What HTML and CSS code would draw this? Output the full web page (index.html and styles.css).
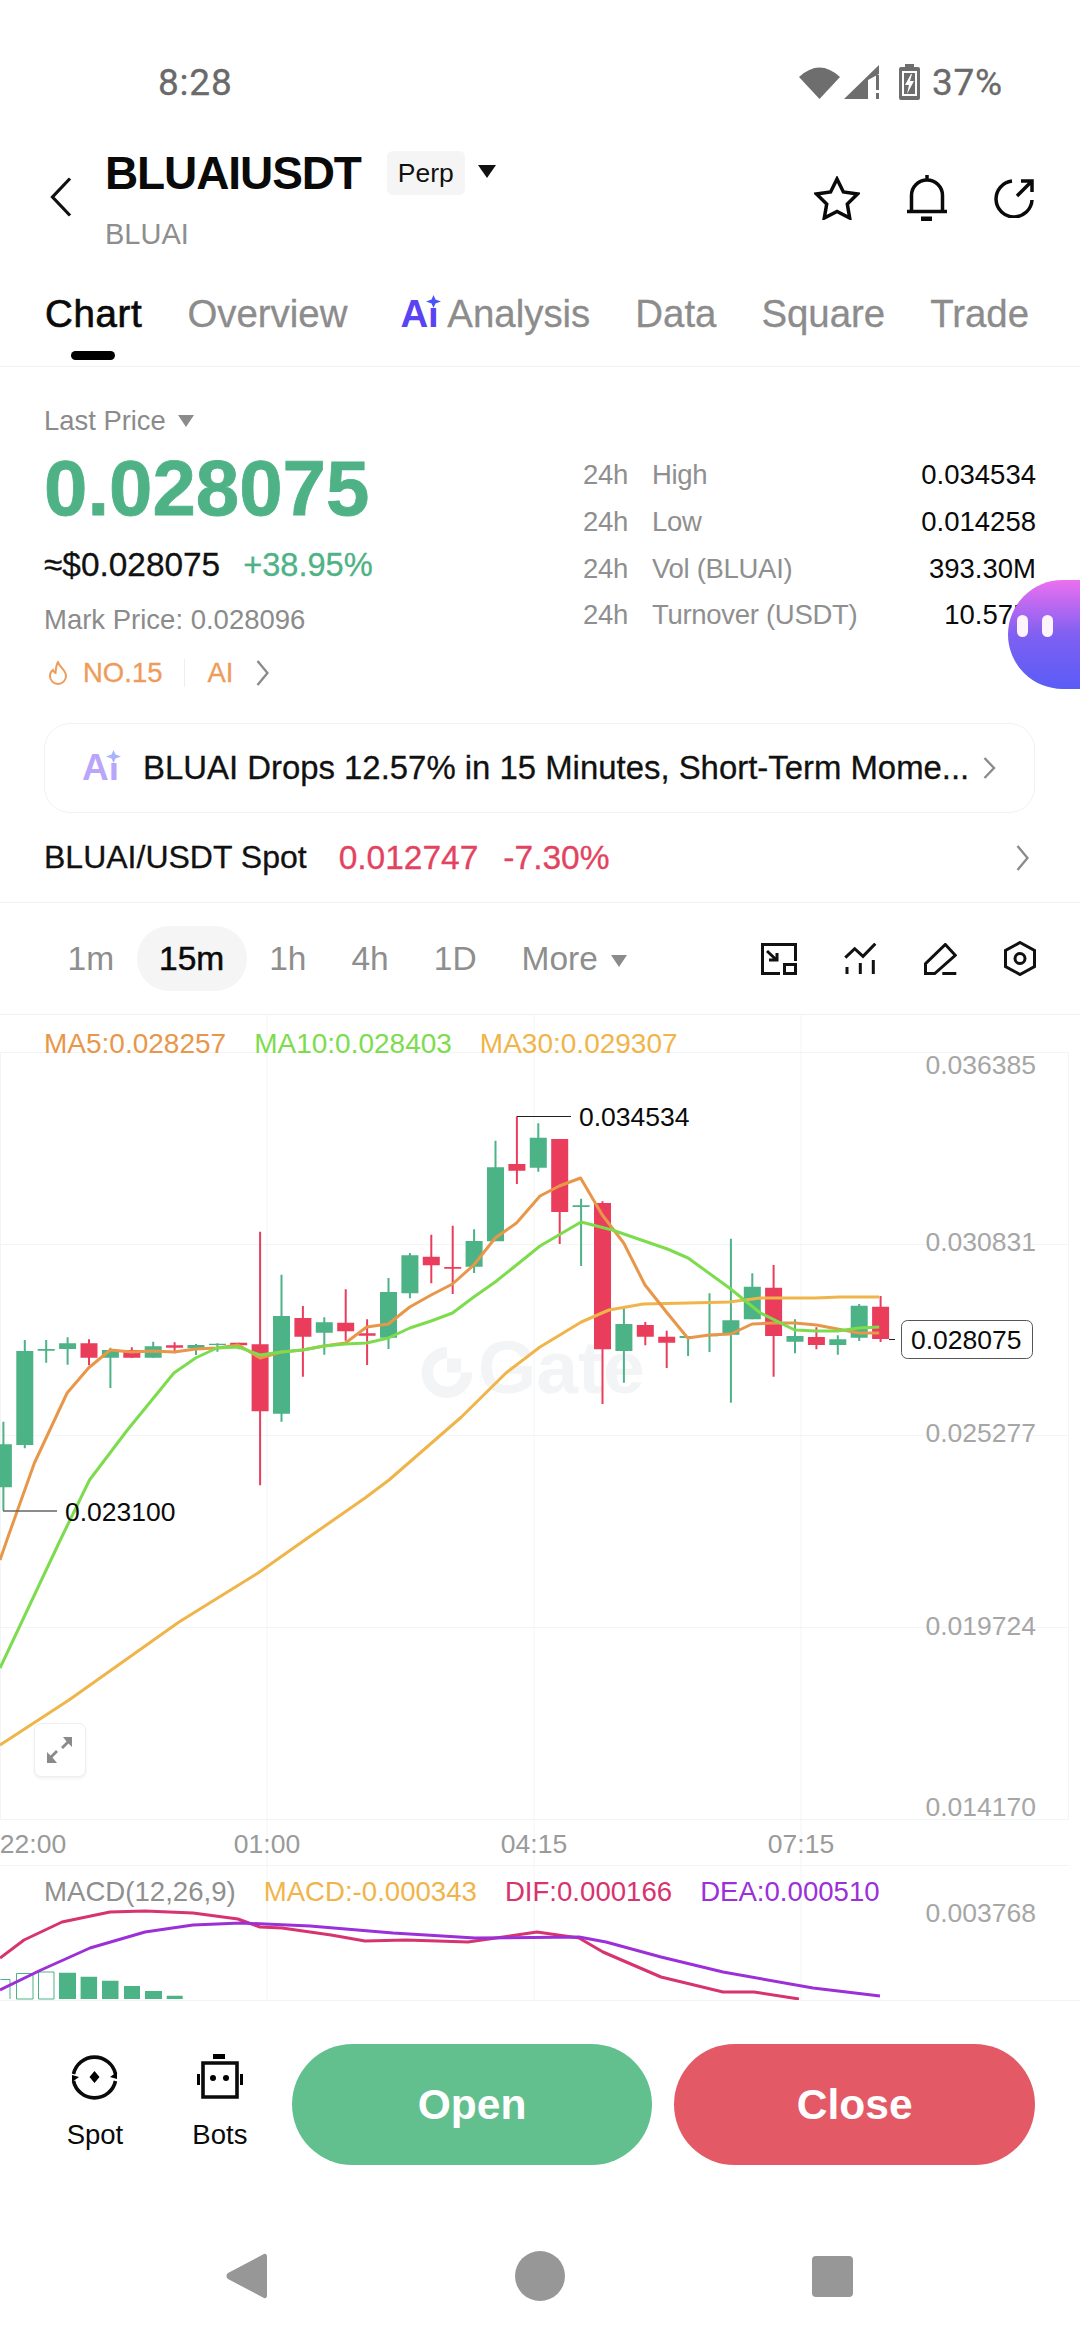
FILE: index.html
```html
<!DOCTYPE html>
<html lang="en">
<head>
  <meta charset="UTF-8" />
  <meta name="viewport" content="width=device-width, initial-scale=1.0" />
  <title>BLUAIUSDT Perp</title>
  <link rel="stylesheet" href="styles.css">
</head>
<body>
  <div class="page">

    <!-- Status bar -->
    <div class="status">
      <span>8:28</span>
      <div class="status-right">
        <svg class="icon-wifi" width="42" height="34" viewBox="0 0 42 34"><path d="M20.5 34L0 12Q20.5-7 41 12Z"/></svg>
        <svg class="icon-signal" width="36" height="34" viewBox="0 0 36 34"><path d="M0 34L35 0V9L24 15V34Z"/><path d="M32 10h3v15h-3zM32 28h3v6h-3z"/></svg>
        <svg class="icon-battery" width="21" height="36" viewBox="0 0 21 36"><path d="M6 0h9v3h4a2 2 0 0 1 2 2v29a2 2 0 0 1-2 2H2a2 2 0 0 1-2-2V5a2 2 0 0 1 2-2h4z"/><path class="cut" d="M3 7h15v25H3z"/><path d="M5 9h11v21H5z"/><path class="cut" d="M12 10L6 21h4l-2 9 7-13h-4l2-7z"/></svg>
        <span>37%</span>
      </div>
    </div>

    <!-- Title -->
    <div class="header">
      <svg class="back" width="22" height="40" viewBox="0 0 22 40"><path d="M20 1.5L2.5 20 20 38.5"/></svg>
      <div class="title-block">
        <div class="title-row">
          <span class="title">BLUAIUSDT</span>
          <span class="perp">Perp</span>
          <span class="caret caret-black"></span>
        </div>
        <div class="subtitle">BLUAI</div>
      </div>
      <div class="header-icons">
        <svg width="46" height="44" viewBox="0 0 46 44"><path d="M23 3l6.4 13 14.1 2-10.2 10 2.4 14L23 35.4 10.3 42l2.4-14L2.5 18l14.1-2z"/></svg>
        <svg width="40" height="46" viewBox="0 0 40 46"><path d="M4.5 36V20.5a15.5 15.5 0 0 1 31 0V36M0 36.5h40M20 0v5"/><path class="thick" d="M14 44h11"/></svg>
        <svg width="40" height="40" viewBox="0 0 40 40"><path d="M18 3A18 18 0 1 0 38 22M23 18L38 3M27 3h11v11"/></svg>
      </div>
    </div>

    <!-- Tabs -->
    <div class="tabs">
      <span class="tab active">Chart</span>
      <span class="tab">Overview</span>
      <span class="tab tab-ai">
        <span class="ai">Ai<svg class="spark" width="15" height="13" viewBox="0 0 15 13"><path d="M7.5 0L9.5 4.5 15 6.5 9.5 8.5 7.5 13 5.5 8.5 0 6.5 5.5 4.5z"/></svg></span>
        Analysis
      </span>
      <span class="tab">Data</span>
      <span class="tab">Square</span>
      <span class="tab">Trade</span>
    </div>

    <!-- Ticker -->
    <div class="ticker">
      <div class="ticker-left">
        <div class="last-label">Last Price <span class="caret caret-gray"></span></div>
        <div class="last-price">0.028075</div>
        <div class="sub-row">
          <span class="usd">≈$0.028075</span>
          <span class="pct">+38.95%</span>
        </div>
        <div class="mark">Mark Price: 0.028096</div>
        <div class="tags">
          <svg class="flame" width="20" height="24" viewBox="0 0 20 24"><path d="M10 1c1 5 8 8 8 14a8 8 0 0 1-16 0c0-3 1.5-5 3-6 .5 1.5 1.5 2.5 2.5 3C8 8 8 4 10 1z"/></svg>
          <span>NO.15</span>
          <span class="tag-sep"></span>
          <span>AI</span>
          <svg class="chev" width="13" height="26" viewBox="0 0 13 26"><path d="M1.5 1L11.5 13 1.5 25"/></svg>
        </div>
      </div>
      <div class="stats">
        <span>24h</span><span>High</span><b>0.034534</b>
        <span>24h</span><span>Low</span><b>0.014258</b>
        <span>24h</span><span>Vol (BLUAI)</span><b>393.30M</b>
        <span>24h</span><span>Turnover (USDT)</span><b>10.57M</b>
      </div>
      <div class="float-btn"><i></i><i></i></div>
    </div>

    <!-- AI news -->
    <div class="banner">
      <span class="ai ai-light">Ai<svg class="spark" width="15" height="13" viewBox="0 0 15 13"><path d="M7.5 0L9.5 4.5 15 6.5 9.5 8.5 7.5 13 5.5 8.5 0 6.5 5.5 4.5z"/></svg></span>
      <span class="banner-text">BLUAI Drops 12.57% in 15 Minutes, Short-Term Mome...</span>
      <svg class="chev" width="13" height="22" viewBox="0 0 13 22"><path d="M1.5 1L11 11 1.5 21"/></svg>
    </div>

    <!-- Spot link -->
    <div class="spot-row">
      <span class="spot-name">BLUAI/USDT Spot</span>
      <span class="spot-price">0.012747</span>
      <span class="spot-pct">-7.30%</span>
      <svg class="chev" width="13" height="26" viewBox="0 0 13 26"><path d="M1.5 1L11.5 13 1.5 25"/></svg>
    </div>

    <!-- Intervals -->
    <div class="intervals">
      <span class="iv">1m</span>
      <span class="iv iv-active">15m</span>
      <span class="iv">1h</span>
      <span class="iv">4h</span>
      <span class="iv">1D</span>
      <span class="iv iv-more">More <span class="caret caret-gray"></span></span>
      <div class="tools">
        <svg width="36" height="32" viewBox="0 0 36 32"><path d="M19 30.5H1.5v-29h33V18M23.5 21.5h11v9h-11zM6 8l9 8.5M8 17h8V10"/></svg>
        <svg width="33" height="32" viewBox="0 0 33 32"><path d="M1.3 14.7L10.7 5.7 19 13.3 31.3.7M3 24v7M16.3 20v11M29.3 17v14"/></svg>
        <svg width="33" height="32" viewBox="0 0 33 32"><path d="M21.3 1.5L31.3 12.3 10.7 30.5H1.5V20.7zM18.3 30.5h14"/></svg>
        <svg width="32" height="35" viewBox="0 0 32 35"><path d="M16 1.5l14.5 8v16L16 33.5l-14.5-8v-16z"/><circle cx="16" cy="17.5" r="5"/></svg>
      </div>
    </div>

    <!-- Chart canvas, drawn in page coordinates -->
    <div class="chart">
      <svg class="plot" width="1080" height="985" viewBox="0 1015 1080 985">
        <path class="grid" d="M0 1052.5H1069M0 1244.5H1069M0 1435.5H1069M0 1627.5H1069M0 1819.5H1069M0 1865.5H1069M267 1015V2000M534 1015V2000M801 1015V2000M1068.5 1052V1820M.5 1052V1820"/>

        <!-- watermark -->
        <path class="mark-logo" d="M447 1347a25.5 25.5 0 1 0 25.5 25.5H461a14 14 0 1 1-14-14zM447 1358.5h14v14h-14z"/>
        <text class="mark-text" x="478" y="1393">Gate</text>

        <!-- candles: wicks and bodies, one path per colour -->
        <path class="wick-up" d="M3.4 1421.7V1510.7M24.8 1340V1448.3M46.2 1340V1362.7M67.6 1337.3V1364.7M110.4 1347.7V1388M153.2 1341.7V1357.7M196 1344V1355M217.4 1343.3V1351.7M281.5 1274.7V1421.7M324.3 1317.3V1354.7M388.5 1278V1349M409.9 1253V1298.3M474.1 1229.3V1273M495.5 1140.7V1241.3M538.3 1123.3V1171.7M581.1 1198.7V1266M623.9 1308.3V1382.7M688.1 1336V1356M709.5 1293.3V1352M730.9 1238.7V1402.7M752.3 1273.3V1319.3M795 1319.3V1353.3M837.8 1335.3V1354.7M859.2 1304V1341"/>
        <path class="body-up" d="M3.4 1444.3V1487.3M24.8 1351V1445M46.2 1349V1350.7M67.6 1343.3V1349M110.4 1350V1357.7M153.2 1346.3V1357.7M196 1345V1348.3M217.4 1343.7V1345M281.5 1316V1413.7M324.3 1322.3V1332.7M388.5 1292V1337.7M409.9 1255.3V1293.3M474.1 1241V1266.7M495.5 1167.3V1241.3M538.3 1137.7V1167.7M581.1 1205.3V1207M623.9 1324V1351M688.1 1336V1338M709.5 1335.3V1336.3M730.9 1320.3V1334.7M752.3 1286.7V1319.3M795 1336V1341.7M837.8 1339.3V1345M859.2 1305.7V1337.7"/>
        <path class="wick-down" d="M89 1339.3V1365.3M131.8 1347.3V1357.7M174.6 1342.3V1353.3M238.7 1342.7V1349.3M260.1 1231.7V1485.3M302.9 1306V1376.7M345.7 1289.3V1340.7M367.1 1319.3V1365M431.3 1234.7V1283.3M452.7 1225.7V1294M516.9 1116.3V1184M559.7 1139V1244M602.5 1201.3V1404M645.3 1322V1345.3M666.7 1330.7V1368M773.6 1265V1376.7M816.4 1327.3V1349.3M880.6 1296V1342"/>
        <path class="body-down" d="M89 1343.3V1357.7M131.8 1350V1357.7M174.6 1345.3V1347.7M238.7 1342.7V1345.3M260.1 1344.3V1411.3M302.9 1318V1336.7M345.7 1322.7V1331.3M367.1 1333.3V1335.7M431.3 1256.7V1265.3M452.7 1267V1268.7M516.9 1164V1170.7M559.7 1139V1212M602.5 1203V1349.3M645.3 1325V1336.7M666.7 1336.7V1342.7M773.6 1287.7V1336M816.4 1337V1345M880.6 1306.7V1339"/>

        <!-- moving averages -->
        <polyline class="ma30" points="0,1745 69,1700 179,1622 258,1573 304.8,1540 365,1498 389,1480 461.4,1417 506,1373 540,1347 581.3,1322 608.9,1310 643.3,1304 688,1303 729.4,1302 760.4,1298 815.5,1298 839.6,1297 879.2,1297"/>
        <polyline class="ma5" points="0,1560 6.9,1540 34.4,1463 67.1,1393 88.5,1368 110.2,1350 131.5,1352 152.9,1351 174.2,1352 195.6,1349 216.9,1348 238.3,1345 260,1358 281.3,1352 302.7,1350 324,1346 345.4,1343 366.7,1327 388.4,1324 409.8,1307 431.1,1295 452.5,1284 473.8,1265 495.2,1238 516.5,1223 540,1196 559.3,1186 580.6,1178 602.3,1215 623.7,1243 645,1285 666.4,1312 687.7,1338 709.1,1335 730.8,1334 752.1,1324 773.5,1323 794.8,1323 816.5,1325 837.5,1329 859.2,1333 879.2,1333"/>
        <polyline class="ma10" points="0,1668 60.3,1540 89.5,1480 127.4,1430 173.9,1373 195.6,1358 216.9,1348 238.3,1347 260,1355 281.3,1352 302.7,1350 324,1346 345.4,1344 366.7,1343 388.4,1338 409.8,1328 431.1,1321 452.5,1313 473.8,1297 495.2,1282 516.5,1265 540,1246 581,1222 612.3,1230 667.4,1249 688.1,1258 729.4,1288 760.4,1313 794.8,1330 816.5,1331 837.5,1331 859.2,1328 879.2,1327"/>

        <!-- high / low / last markers -->
        <path class="leader" d="M517 1116.5H571"/>
        <text class="price-tag" x="579" y="1125.5">0.034534</text>
        <path class="leader leader-gray" d="M3 1511H57"/>
        <text class="price-tag" x="65" y="1520.5">0.023100</text>
        <path class="leader" d="M889 1339.5H895"/>
        <rect class="last-box" x="901.5" y="1320.5" width="131" height="38" rx="6"/>
        <text class="price-tag" x="911" y="1349">0.028075</text>

        <!-- price axis -->
        <text class="axis" x="925.5" y="1074">0.036385</text>
        <text class="axis" x="925.5" y="1251">0.030831</text>
        <text class="axis" x="925.5" y="1442">0.025277</text>
        <text class="axis" x="925.5" y="1635">0.019724</text>
        <text class="axis" x="925.5" y="1816">0.014170</text>
        <text class="axis" x="925.5" y="1922">0.003768</text>

        <!-- time axis -->
        <text class="axis time" x="33" y="1853">22:00</text>
        <text class="axis time" x="267" y="1853">01:00</text>
        <text class="axis time" x="534" y="1853">04:15</text>
        <text class="axis time" x="801" y="1853">07:15</text>

        <!-- MACD -->
        <path class="hist-open" d="M.5 1979.5H10V1999M16.5 1973.5H33V1999H16.5ZM38.5 1972H54V1999H38.5Z"/>
        <path class="hist" d="M59 1972.7h17V1999H59zM80.6 1976.7h16.5V1999H80.6zM102 1980.7h16.5V1999H102zM124 1986h16V1999H124zM145 1991h17V1999H145zM166.7 1995.7h16V1999H166.7z"/>
        <polyline class="dif" points="0,1958 24,1940 62,1922 110,1912 145,1911 193,1913 238,1919 260,1927 282,1928 331,1935 365,1941 406,1940 468,1942 496,1938 537,1932 579,1938 603,1952 661,1977 723,1992 754,1992 799,1999"/>
        <polyline class="dea" points="0,1990 41,1970 90,1948 145,1932 193,1925 241,1923 310,1926 393,1933 475,1938 579,1937 606,1942 661,1957 723,1972 813,1988 880,1996"/>
      </svg>

      <div class="legend legend-ma">
        <span class="c-ma5">MA5:0.028257</span>
        <span class="c-ma10">MA10:0.028403</span>
        <span class="c-ma30">MA30:0.029307</span>
      </div>
      <div class="legend legend-macd">
        <span class="c-gray">MACD(12,26,9)</span>
        <span class="c-ma30">MACD:-0.000343</span>
        <span class="c-dif">DIF:0.000166</span>
        <span class="c-dea">DEA:0.000510</span>
      </div>
      <div class="expand">
        <svg width="26" height="26" viewBox="0 0 26 26"><path d="M25 0v10l-3.5-3.5L16 12l-2-2 5.5-5.5L16 0zM0 26V15l3.5 3.5L9 13l2 2-5.5 5.5L10 26z"/></svg>
      </div>
    </div>

    <!-- Actions -->
    <div class="actions">
      <div class="action">
        <svg width="47" height="46" viewBox="0 0 47 46"><path class="line" d="M2.5 20A21.5 21.5 0 0 1 44.5 20M44.5 27A21.5 21.5 0 0 1 2.5 27"/><path d="M23.5 17l5 6-5 6-5-6zM39 23l7-5v7zM8 23l-7 5v-7z"/></svg>
        <span>Spot</span>
      </div>
      <div class="action">
        <svg width="46" height="46" viewBox="0 0 46 46"><path d="M16 0h12v5H16z"/><path class="line" d="M6 9h34v34H6z"/><path d="M0 20h3v11H0zM43 20h3v11h-3z"/><circle cx="16" cy="24" r="3"/><circle cx="29" cy="24" r="3"/></svg>
        <span>Bots</span>
      </div>
      <div class="btn btn-open">Open</div>
      <div class="btn btn-close">Close</div>
    </div>

    <!-- Android nav -->
    <div class="navbar">
      <svg width="42" height="46" viewBox="0 0 42 46"><path d="M37 1.5c2-1.5 4-.5 4 2v39c0 2.5-2 3.5-4 2L2 26c-2-1.5-2-4.5 0-6z"/></svg>
      <span class="nav-circle"></span>
      <span class="nav-square"></span>
    </div>
  </div>
</body>
</html>
```

FILE: styles.css
```css
* {
  box-sizing: border-box;
}
body {
  margin: 0;
  background: #fff;
  font-family: "Liberation Sans", Arial, sans-serif;
  color: #111;
}
.page {
  width: 1080px;
  height: 2340px;
  overflow: hidden;
  background: #fff;
}
svg {
  display: block;
  flex: none;
}

/* Status bar */
.status {
  height: 124px;
  padding: 40px 77px 0 158px;
  display: flex;
  justify-content: space-between;
  align-items: center;
  font-family: Roboto, sans-serif;
  font-size: 37px;
  letter-spacing: .8px;
  color: #6a6a6a;
  -webkit-text-stroke: .3px #6a6a6a;
}
.status-right {
  display: flex;
  align-items: center;
}
.status svg path {
  fill: #6e6e6e;
}
.status svg path.cut {
  fill: #fff;
}
.icon-wifi {
  margin-right: 3px;
}
.icon-battery {
  margin: 0 12px 0 19px;
}

/* Title */
.header {
  height: 143px;
  padding: 0 46px 0 50px;
  display: flex;
  position: relative;
}
.back {
  margin-top: 53px;
  margin-right: 33px;
}
.back path,
.chev path {
  fill: none;
  stroke: #111;
  stroke-width: 3.2;
}
.title-row {
  display: flex;
  align-items: center;
  height: 72px;
  margin-top: 13px;
}
.title {
  font-size: 46px;
  font-weight: bold;
  letter-spacing: -1.1px;
  color: #0a0a0a;
}
.perp {
  margin-left: 26px;
  width: 78px;
  height: 44px;
  background: #f5f5f5;
  border-radius: 6px;
  font-size: 26.5px;
  line-height: 44px;
  text-align: center;
}
.caret {
  display: inline-block;
  border-left: 9px solid transparent;
  border-right: 9px solid transparent;
  border-top: 13px solid #111;
}
.caret-black {
  margin-left: 13px;
  margin-top: -3px;
}
.caret-gray {
  border-left-width: 8.5px;
  border-right-width: 8.5px;
  border-top: 12px solid #8b8b8b;
  vertical-align: 3px;
  margin-left: 5px;
}
.subtitle {
  font-size: 29px;
  color: #8e8e8e;
  line-height: 34px;
  margin-top: 8px;
}
.header-icons {
  margin-left: auto;
  display: flex;
  gap: 47px;
  align-items: center;
  height: 100px;
  margin-top: 24px;
}
.header-icons path {
  fill: none;
  stroke: #0a0a0a;
  stroke-width: 3.5;
}
.header-icons path.thick {
  stroke-width: 5;
}

/* Tabs */
.tabs {
  height: 100px;
  padding: 14px 0 0 45px;
  display: flex;
  gap: 45px;
  align-items: center;
  border-bottom: 1px solid #f0f0f0;
  font-size: 38.4px;
  color: #8c8c8c;
  position: relative;
}
.tab {
  position: relative;
  -webkit-text-stroke: .3px #8c8c8c;
  white-space: nowrap;
  margin-top: -20px;
}
.tab.active {
  color: #0a0a0a;
  letter-spacing: .7px;
  -webkit-text-stroke: .7px #0a0a0a;
}
.tab.active::after {
  content: "";
  position: absolute;
  left: 26px;
  top: 59px;
  width: 44px;
  height: 9px;
  background: #000;
  border-radius: 5px;
}
.tab-ai {
  margin-left: 8px;
}
.ai {
  position: relative;
  display: inline-block;
  font-weight: bold;
  color: #5a43f2;
  -webkit-text-stroke: 0;
}
.spark {
  position: absolute;
  right: -2px;
  top: 3px;
  background: #fff;
}
.spark path {
  fill: #4a55f5;
}

/* Ticker */
.ticker {
  height: 356px;
  padding: 34px 44px 0 44px;
  display: flex;
  justify-content: space-between;
  position: relative;
}
.last-label {
  font-size: 27.4px;
  line-height: 40px;
  color: #8b8b8b;
}
.last-price {
  font-size: 78px;
  font-weight: bold;
  line-height: 80px;
  margin-top: 7px;
  color: #4fb286;
  -webkit-text-stroke: .8px #4fb286;
}
.sub-row {
  display: flex;
  gap: 23px;
  margin-top: 17px;
  line-height: 40px;
  font-size: 33.4px;
}
.usd {
  -webkit-text-stroke: .3px #111;
}
.pct {
  color: #4fb286;
  font-size: 32.6px;
  -webkit-text-stroke: .3px #4fb286;
}
.mark {
  margin-top: 17px;
  font-size: 27.5px;
  line-height: 36px;
  color: #8b8b8b;
}
.tags {
  margin-top: 17px;
  height: 36px;
  padding-left: 4px;
  display: flex;
  align-items: center;
  font-size: 27.5px;
  color: #ee9b5b;
  -webkit-text-stroke: .3px #ee9b5b;
}
.flame {
  margin-right: 15px;
}
.flame path {
  fill: none;
  stroke: #ee9b5b;
  stroke-width: 2;
}
.tag-sep {
  width: 1px;
  height: 28px;
  background: #eee;
  margin: 0 22px;
}
.tags .chev {
  margin-left: 23px;
}
.tags .chev path,
.banner .chev path,
.spot-row .chev path {
  stroke: #8b8b8b;
  stroke-width: 2.4;
}
.stats {
  width: 453px;
  margin-top: 51px;
  align-self: flex-start;
  display: grid;
  grid-template-columns: 69px 1fr auto;
  grid-auto-rows: 46.7px;
  align-items: center;
  font-size: 27.5px;
  color: #8f8f8f;
}
.stats span {
  letter-spacing: -.3px;
}
.stats b {
  font-weight: normal;
  color: #0a0a0a;
  text-align: right;
}
.float-btn {
  position: absolute;
  right: 0;
  top: 213px;
  width: 72px;
  height: 109px;
  border-radius: 55px 0 0 55px;
  background: linear-gradient(#ec70ef, #7f60f2 50%, #5a5cf6);
  display: flex;
  gap: 14px;
  padding: 35px 0 0 9px;
}
.float-btn i {
  width: 11px;
  height: 22px;
  background: #fdf3fd;
  border-radius: 6px;
}

/* AI news */
.banner {
  height: 90px;
  margin: 0 45px 0 44px;
  padding: 0 38px 0 37px;
  border: 1.5px solid #f2f2f4;
  border-radius: 26px;
  display: flex;
  align-items: center;
}
.ai-light {
  font-size: 37px;
  color: #b9a6fa;
}
.ai-light .spark path {
  fill: #a9b4fb;
}
.banner-text {
  margin-left: 24px;
  font-size: 32.9px;
  white-space: nowrap;
  -webkit-text-stroke: .3px #111;
}
.banner .chev {
  margin-left: auto;
}

/* Spot link */
.spot-row {
  height: 90px;
  padding: 0 51px 0 44px;
  display: flex;
  align-items: center;
  border-bottom: 1px solid #f0f0f0;
  font-size: 32px;
  -webkit-text-stroke: .3px currentColor;
}
.spot-price,
.spot-pct {
  color: #e2445f;
  font-size: 33.5px;
}
.spot-price {
  margin-left: 32px;
}
.spot-pct {
  margin-left: 25px;
}
.spot-row .chev {
  margin-left: auto;
  -webkit-text-stroke: 0;
}

/* Intervals */
.intervals {
  height: 112px;
  padding: 0 44px 0 45px;
  display: flex;
  align-items: center;
  border-bottom: 1px solid #f0f0f0;
  font-size: 33.5px;
  color: #8e8e8e;
}
.iv {
  padding: 0 22.5px;
  line-height: 65px;
  white-space: nowrap;
}
.iv-active {
  background: #f5f5f5;
  border-radius: 32px;
  color: #0a0a0a;
  -webkit-text-stroke: .5px #0a0a0a;
}
.iv-more .caret {
  margin-left: 4px;
}
.tools {
  margin-left: auto;
  display: flex;
  align-items: center;
  gap: 47px;
}
.tools path,
.tools circle {
  fill: none;
  stroke: #111;
  stroke-width: 3;
}

/* Chart */
.chart {
  position: relative;
  height: 985px;
}
.plot {
  overflow: hidden;
}
.grid {
  fill: none;
  stroke: #f3f4f5;
  stroke-width: 1;
}
.mark-logo {
  fill: #f3f4f5;
}
.mark-text {
  font-size: 75px;
  font-weight: bold;
  fill: #f3f4f5;
}
.wick-up,
.wick-down,
.body-up,
.body-down {
  fill: none;
}
.wick-up,
.wick-down {
  stroke-width: 2;
}
.body-up,
.body-down {
  stroke-width: 17;
}
.wick-up,
.body-up {
  stroke: #4cb386;
}
.wick-down,
.body-down {
  stroke: #ea3d5c;
}
.ma5,
.ma10,
.ma30,
.dif,
.dea {
  fill: none;
  stroke-width: 3;
  stroke-linejoin: round;
}
.ma5 {
  stroke: #e8974a;
}
.ma10 {
  stroke: #7ddc4e;
}
.ma30 {
  stroke: #f0b54a;
}
.dif {
  stroke: #d6336f;
}
.dea {
  stroke: #9b30d9;
}
.leader {
  fill: none;
  stroke: #222;
  stroke-width: 1;
}
.leader-gray {
  stroke: #666;
  stroke-width: 1.5;
}
.price-tag {
  font-size: 26.5px;
  fill: #0a0a0a;
}
.last-box {
  fill: #fff;
  stroke: #555;
  stroke-width: 1;
}
.axis {
  font-size: 26.5px;
  fill: #a6a6a6;
}
.time {
  text-anchor: middle;
  fill: #9a9a9a;
}
.hist {
  fill: #4cb386;
}
.hist-open {
  fill: #fff;
  stroke: #4cb386;
  stroke-width: 1;
}
.legend {
  position: absolute;
  left: 44px;
  display: flex;
  white-space: nowrap;
  line-height: 36px;
}
.legend-ma {
  top: 11px;
  gap: 28px;
  font-size: 28px;
}
.legend-macd {
  top: 859px;
  gap: 28px;
  font-size: 27.6px;
}
.c-ma5 {
  color: #e8974a;
}
.c-ma10 {
  color: #7ddc4e;
}
.c-ma30 {
  color: #f0b54a;
}
.c-gray {
  color: #8f8f8f;
}
.c-dif {
  color: #d6336f;
}
.c-dea {
  color: #9b30d9;
}
.expand {
  position: absolute;
  left: 34px;
  top: 708px;
  width: 52px;
  height: 54px;
  background: #fff;
  border: 1.5px solid #eeeeee;
  border-radius: 7px;
  box-shadow: 0 2px 3px rgba(0,0,0,0.05);
  display: flex;
  align-items: center;
  justify-content: center;
}
.expand path {
  fill: #8a8a8a;
}

/* Actions */
.actions {
  height: 200px;
  padding: 43px 45px 0 65px;
  display: flex;
  align-items: flex-start;
  border-top: 1px solid #f3f4f5;
}
.action {
  width: 60px;
  display: flex;
  flex-direction: column;
  align-items: center;
  font-size: 27.5px;
  padding-top: 10px;
  color: #0a0a0a;
}
.action + .action {
  margin-left: 65px;
}
.action span {
  margin-top: 19px;
  line-height: 32px;
}
.action .line {
  fill: none;
  stroke: #0a0a0a;
  stroke-width: 3.6;
}
.btn {
  width: 361px;
  height: 121px;
  border-radius: 60.5px;
  color: #fff;
  font-size: 42.5px;
  font-weight: bold;
  line-height: 121px;
  text-align: center;
}
.btn-open {
  margin-left: 42px;
  background: #62c08e;
}
.btn-close {
  margin-left: 22px;
  background: #e35a66;
}

/* Android nav */
.navbar {
  padding: 51px 227px 0 226px;
  display: flex;
  align-items: center;
  justify-content: space-between;
}
.navbar path {
  fill: #979797;
}
.nav-circle {
  width: 50px;
  height: 50px;
  border-radius: 50%;
  background: #979797;
}
.nav-square {
  width: 41px;
  height: 41px;
  border-radius: 4px;
  background: #979797;
}
```
